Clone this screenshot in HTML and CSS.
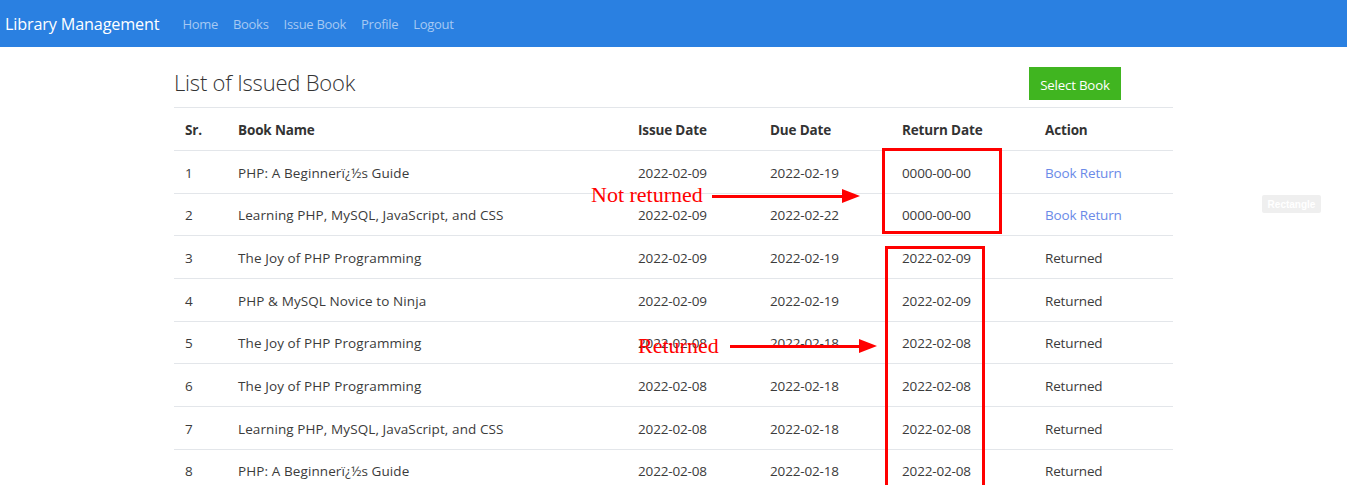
FILE: index.html
```html
<!DOCTYPE html>
<html>
<head>
<meta charset="utf-8">
<title>Library Management</title>
<link rel="stylesheet" href="styles.css">
</head>
<body>
<nav class="navbar">
  <span class="brand">Library Management</span>
  <ul class="nav-links">
    <li>Home</li>
    <li>Books</li>
    <li>Issue Book</li>
    <li>Profile</li>
    <li>Logout</li>
  </ul>
</nav>
<main class="container">
  <div class="page-head">
    <h2 class="title">List of Issued Book</h2>
    <span class="btn-green">Select Book</span>
  </div>
  <table class="issued">
    <colgroup>
      <col class="c-sr"><col class="c-name"><col class="c-issue"><col class="c-due"><col class="c-ret"><col class="c-act">
    </colgroup>
    <thead>
      <tr><th>Sr.</th><th>Book Name</th><th>Issue Date</th><th>Due Date</th><th>Return Date</th><th>Action</th></tr>
    </thead>
    <tbody>
      <tr><td>1</td><td class="name">PHP: A Beginnerï¿½s Guide</td><td>2022-02-09</td><td>2022-02-19</td><td>0000-00-00</td><td><span class="link">Book Return</span></td></tr>
      <tr><td>2</td><td class="name">Learning PHP, MySQL, JavaScript, and CSS</td><td>2022-02-09</td><td>2022-02-22</td><td>0000-00-00</td><td><span class="link">Book Return</span></td></tr>
      <tr><td>3</td><td class="name">The Joy of PHP Programming</td><td>2022-02-09</td><td>2022-02-19</td><td>2022-02-09</td><td>Returned</td></tr>
      <tr><td>4</td><td class="name">PHP &amp; MySQL Novice to Ninja</td><td>2022-02-09</td><td>2022-02-19</td><td>2022-02-09</td><td>Returned</td></tr>
      <tr><td>5</td><td class="name">The Joy of PHP Programming</td><td>2022-02-08</td><td>2022-02-18</td><td>2022-02-08</td><td>Returned</td></tr>
      <tr><td>6</td><td class="name">The Joy of PHP Programming</td><td>2022-02-08</td><td>2022-02-18</td><td>2022-02-08</td><td>Returned</td></tr>
      <tr><td>7</td><td class="name">Learning PHP, MySQL, JavaScript, and CSS</td><td>2022-02-08</td><td>2022-02-18</td><td>2022-02-08</td><td>Returned</td></tr>
      <tr><td>8</td><td class="name">PHP: A Beginnerï¿½s Guide</td><td>2022-02-08</td><td>2022-02-18</td><td>2022-02-08</td><td>Returned</td></tr>
    </tbody>
  </table>
</main>

<div class="anno box-not"></div>
<div class="anno box-ret"></div>
<div class="anno label label-not">Not returned</div>
<div class="anno arrow arrow-not"></div>
<div class="anno label label-ret">Returned</div>
<div class="anno arrow arrow-ret"></div>
<div class="anno rect-tag">Rectangle</div>
</body>
</html>
```

FILE: styles.css
```css
html, body {
  margin: 0;
  padding: 0;
  background: #fff;
  height: 485px;
  overflow: hidden;
}
body {
  font-family: "Open Sans", "Noto Sans", sans-serif;
  font-size: 13.5px;
  color: #3b3b3b;
  position: relative;
}
.navbar {
  height: 47px;
  background: #2a80e1;
  display: flex;
  align-items: center;
  padding: 0 5px;
  box-sizing: border-box;
}
.brand {
  color: #fff;
  font-size: 16.2px;
  margin-right: 15.5px;
  letter-spacing: -0.15px;
}
.nav-links {
  list-style: none;
  display: flex;
  margin: 0;
  padding: 0;
}
.nav-links li {
  color: #a6c9f3;
  font-size: 13px;
  padding: 0 7.5px;
  letter-spacing: -0.3px;
}
.container {
  width: 999px;
  margin: 0 auto;
}
.page-head {
  display: flex;
  align-items: center;
  justify-content: space-between;
  padding: 20px 52px 7px 0;
  height: 33px;
}
.title {
  margin: 0 0 3px;
  font-size: 22px;
  font-weight: 300;
  color: #333;
  letter-spacing: -0.2px;
}
.btn-green {
  background: #40b520;
  color: #fff;
  width: 92px;
  height: 33px;
  display: flex;
  align-items: center;
  justify-content: center;
  font-size: 13.3px;
  letter-spacing: -0.2px;
  padding-top: 2px;
  box-sizing: border-box;
}
.issued {
  width: 999px;
  border-collapse: collapse;
  table-layout: fixed;
}
.c-sr { width: 53px; }
.c-name { width: 400px; }
.c-issue { width: 132px; }
.c-due { width: 132px; }
.c-ret { width: 143px; }
.c-act { width: 139px; }
.issued th, .issued td {
  text-align: left;
  padding: 11.5px 11px 10.2px;
  line-height: 20px;
  border-top: 1px solid #e3e6ea;
  white-space: nowrap;
  letter-spacing: -0.15px;
}
.issued td.name { letter-spacing: 0.1px; }
.issued th {
  font-weight: 700;
  color: #333;
  border-bottom: 1px solid #e3e6ea;
  padding-top: 12px;
  padding-bottom: 10px;
}
.link { color: #6b8ae8; }

.anno { position: absolute; }
.box-not {
  left: 882px;
  top: 148px;
  width: 114px;
  height: 80px;
  border: 3px solid #f00;
}
.box-ret {
  left: 885px;
  top: 246px;
  width: 94px;
  height: 236px;
  border: 3px solid #f00;
}
.label {
  font-family: "Liberation Serif", serif;
  color: #f00;
  font-size: 22px;
  line-height: 24px;
}
.label-not { left: 591px; top: 183px; }
.label-ret { left: 638px; top: 334px; }
.arrow {
  height: 3px;
  background: #f00;
}
.arrow::after {
  content: "";
  position: absolute;
  right: -17px;
  top: -6px;
  border-left: 18px solid #f00;
  border-top: 7.5px solid transparent;
  border-bottom: 7.5px solid transparent;
}
.arrow-not { left: 712px; top: 195px; width: 131px; }
.arrow-ret { left: 730px; top: 345px; width: 130px; }
.rect-tag {
  left: 1262px;
  top: 195px;
  width: 59px;
  height: 18px;
  background: #efefef;
  color: #fff;
  font-family: "Liberation Sans", sans-serif;
  font-weight: 700;
  font-size: 10px;
  display: flex;
  align-items: center;
  justify-content: center;
  border-radius: 2px;
}
```
